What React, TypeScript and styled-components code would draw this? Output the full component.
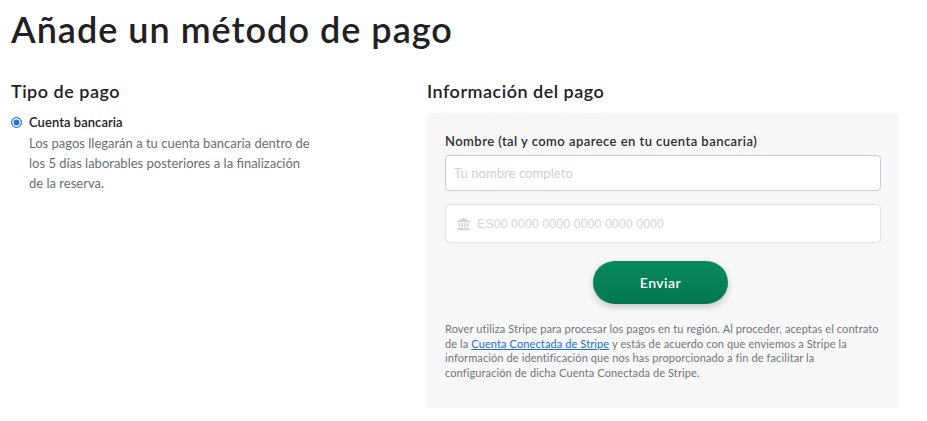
import React from "react";
import styled, { createGlobalStyle } from "styled-components";

const GlobalStyle = createGlobalStyle`
  html, body {
    margin: 0;
    padding: 0;
    background: #fff;
    font-family: "Lato", "Liberation Sans", sans-serif;
    color: #1f2124;
  }
  * {
    box-sizing: border-box;
  }
`;

const Page = styled.div`
  width: 927px;
  height: 421px;
  padding: 7px 28px 0 11px;
  overflow: hidden;
`;

const Title = styled.h1`
  margin: 0 0 28px;
  font-size: 36px;
  line-height: 44px;
  font-weight: 600;
  letter-spacing: 1px;
  color: #1f2124;
`;

const Columns = styled.div`
  display: flex;
`;

const LeftColumn = styled.div`
  width: 416px;
`;

const RightColumn = styled.div`
  width: 472px;
`;

const SectionHeading = styled.h2`
  margin: 0 0 10px;
  font-size: 18px;
  line-height: 24px;
  font-weight: 600;
  letter-spacing: 0.5px;
  color: #1f2124;
`;

const RadioRow = styled.div`
  display: flex;
  gap: 7px;
  margin-top: 12px;
`;

const Radio = styled.span`
  flex: none;
  width: 11px;
  height: 11px;
  margin-top: 2px;
  border-radius: 50%;
  border: 1.5px solid #1a73e8;
  background: #1a73e8;
  box-shadow: inset 0 0 0 1.5px #fff;
`;

const RadioLabel = styled.div`
  font-size: 13px;
  line-height: 15px;
  font-weight: 600;
  letter-spacing: 0.05px;
`;

const RadioText = styled.p`
  margin: 3px 0 0;
  width: 285px;
  font-size: 13px;
  line-height: 20px;
  letter-spacing: 0;
  color: #686e74;
`;

const Panel = styled.form`
  height: 295px;
  padding: 20px 18px 0;
  background: #f7f7f7;
  border-radius: 4px;
`;

const FieldLabel = styled.label`
  display: block;
  margin-bottom: 6px;
  font-size: 13px;
  line-height: 16px;
  font-weight: 600;
  letter-spacing: 0.45px;
  color: #2c2f33;
`;

const Field = styled.div<{ $height: number; $faint?: boolean }>`
  display: flex;
  align-items: center;
  gap: 7px;
  height: ${(p) => p.$height}px;
  padding: 0 8px 0 ${(p) => (p.$faint ? 11 : 8)}px;
  background: #fff;
  border: 1px solid ${(p) => (p.$faint ? "#dfe1e6" : "#c9cbd6")};
  border-radius: 4px;
  margin-bottom: 13px;
`;

const NameInput = styled.input`
  width: 100%;
  border: 0;
  outline: 0;
  padding: 0;
  background: transparent;
  font-family: "Lato", sans-serif;
  font-size: 13px;
  letter-spacing: 0.08px;

  &::placeholder {
    color: #cdd0d5;
    opacity: 1;
  }
`;

const IbanInput = styled.input`
  width: 100%;
  border: 0;
  outline: 0;
  padding: 0;
  background: transparent;
  font-family: "Liberation Sans", Arial, sans-serif;
  font-size: 12.5px;

  &::placeholder {
    color: #d3d5da;
    opacity: 1;
  }
`;

const BankIcon = styled.svg`
  flex: none;
  width: 13px;
  height: 12px;
  fill: #d3d5da;
`;

const ButtonRow = styled.div`
  display: flex;
  justify-content: center;
  margin: 18px 5px 0 0;
`;

const SubmitButton = styled.button`
  width: 135px;
  height: 43px;
  border: 0;
  border-radius: 22px;
  background: linear-gradient(#078a60, #04774f);
  box-shadow: 0 3px 7px rgba(0, 0, 0, 0.2);
  color: #fff;
  font-family: "Lato", sans-serif;
  font-size: 14px;
  font-weight: 600;
  letter-spacing: 0.45px;
`;

const Legal = styled.p`
  margin: 18px 0 0;
  font-size: 11px;
  line-height: 14.5px;
  letter-spacing: 0.11px;
  color: #70757b;
`;

const LegalLink = styled.a`
  color: #1a6fdc;
  text-decoration: underline;
`;

const App: React.FC = () => {
  return (
    <Page>
      <GlobalStyle />
      <Title>Añade un método de pago</Title>
      <Columns>
        <LeftColumn>
          <SectionHeading>Tipo de pago</SectionHeading>
          <RadioRow>
            <Radio />
            <div>
              <RadioLabel>Cuenta bancaria</RadioLabel>
              <RadioText>
                Los pagos llegarán a tu cuenta bancaria dentro de los 5 días
                laborables posteriores a la finalización de la reserva.
              </RadioText>
            </div>
          </RadioRow>
        </LeftColumn>
        <RightColumn>
          <SectionHeading>Información del pago</SectionHeading>
          <Panel>
            <FieldLabel>Nombre (tal y como aparece en tu cuenta bancaria)</FieldLabel>
            <Field $height={36}>
              <NameInput placeholder="Tu nombre completo" />
            </Field>
            <Field $height={39} $faint>
              <BankIcon viewBox="0 0 13 12">
                <path d="M6.5 0 13 3v1.2H0V3z" />
                <rect x="1.6" y="5" width="1.6" height="4.4" />
                <rect x="4.4" y="5" width="1.6" height="4.4" />
                <rect x="7.2" y="5" width="1.6" height="4.4" />
                <rect x="10" y="5" width="1.6" height="4.4" />
                <rect x="0.6" y="10" width="11.8" height="2" />
              </BankIcon>
              <IbanInput placeholder="ES00 0000 0000 0000 0000 0000" />
            </Field>
            <ButtonRow>
              <SubmitButton type="button">Enviar</SubmitButton>
            </ButtonRow>
            <Legal>
              Rover utiliza Stripe para procesar los pagos en tu región. Al
              proceder, aceptas el contrato de la{" "}
              <LegalLink href="#">Cuenta Conectada de Stripe</LegalLink> y estás
              de acuerdo con que enviemos a Stripe la información de
              identificación que nos has proporcionado a fin de facilitar la
              configuración de dicha Cuenta Conectada de Stripe.
            </Legal>
          </Panel>
        </RightColumn>
      </Columns>
    </Page>
  );
};

export default App;
